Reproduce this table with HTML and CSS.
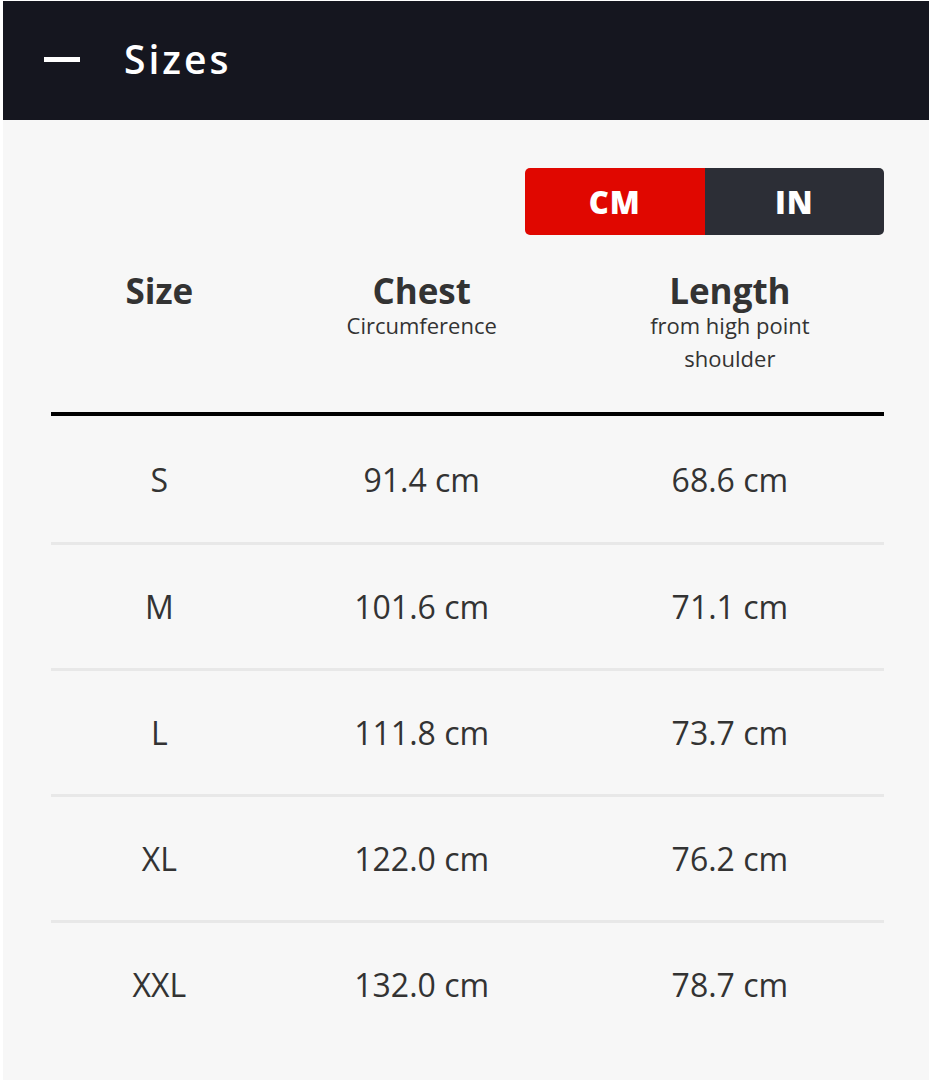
FILE: index.html
```html
<!DOCTYPE html>
<html lang="en">
<head>
<meta charset="utf-8">
<title>Sizes</title>
<link rel="stylesheet" href="styles.css">
</head>
<body>
<div class="page">
  <header class="bar">
    <span class="minus"></span>
    <h1 class="bar-title">Sizes</h1>
  </header>
  <section class="content">
    <div class="toggle-row">
      <div class="toggle">
        <span class="unit unit-on">CM</span>
        <span class="unit unit-off">IN</span>
      </div>
    </div>
    <table class="sizes">
      <colgroup>
        <col class="c1">
        <col class="c2">
        <col class="c3">
      </colgroup>
      <thead>
        <tr>
          <th><span class="th-title">Size</span></th>
          <th><span class="th-title">Chest</span><span class="th-sub">Circumference</span></th>
          <th><span class="th-title">Length</span><span class="th-sub th-sub-narrow">from high point shoulder</span></th>
        </tr>
      </thead>
      <tbody>
        <tr class="first"><td>S</td><td>91.4 cm</td><td>68.6 cm</td></tr>
        <tr><td>M</td><td>101.6 cm</td><td>71.1 cm</td></tr>
        <tr><td>L</td><td>111.8 cm</td><td>73.7 cm</td></tr>
        <tr><td>XL</td><td>122.0 cm</td><td>76.2 cm</td></tr>
        <tr><td>XXL</td><td>132.0 cm</td><td>78.7 cm</td></tr>
      </tbody>
    </table>
  </section>
</div>
</body>
</html>
```

FILE: styles.css
```css
html, body {
  margin: 0;
  padding: 0;
}
body {
  background: #ffffff;
  font-family: "Open Sans", "Noto Sans", sans-serif;
  color: #333333;
}
.page {
  margin-left: 3px;
  background: #f7f7f7;
  min-height: 1080px;
}
.bar {
  height: 119px;
  margin-top: 1px;
  background: #15161f;
  display: flex;
  align-items: center;
  padding-left: 41px;
  gap: 44px;
}
.minus {
  width: 36px;
  height: 5px;
  background: #ffffff;
  margin-top: -2px;
}
.bar-title {
  margin: 0;
  color: #ffffff;
  font-size: 39px;
  font-weight: 600;
  letter-spacing: 3px;
  line-height: 1;
  margin-top: -4px;
}
.content {
  padding: 48px 45px 0 48px;
}
.toggle-row {
  display: flex;
  justify-content: flex-end;
}
.toggle {
  display: flex;
  width: 359px;
  height: 67px;
  border-radius: 5px;
  overflow: hidden;
}
.unit {
  flex: 1;
  display: flex;
  align-items: center;
  justify-content: center;
  color: #ffffff;
  font-weight: 800;
  font-size: 31px;
  letter-spacing: 1px;
}
.unit-on {
  background: #e00700;
}
.unit-off {
  background: #2c2e36;
}
.sizes {
  width: 100%;
  border-collapse: collapse;
  table-layout: fixed;
}
.c1 { width: 26%; }
.c2 { width: 37%; }
.c3 { width: 37%; }
.sizes th {
  vertical-align: top;
  text-align: center;
  padding: 38px 0 37px;
  border-bottom: 4px solid #000000;
}
.th-title {
  display: block;
  font-size: 35px;
  font-weight: 700;
  line-height: 36px;
  color: #333333;
}
.th-sub {
  display: block;
  font-size: 22px;
  font-weight: 400;
  line-height: 33px;
  color: #333333;
}
.th-sub-narrow {
  max-width: 200px;
  margin: 0 auto;
}
.sizes td {
  height: 123px;
  padding: 0;
  text-align: center;
  vertical-align: middle;
  font-size: 32px;
  font-weight: 400;
  color: #333333;
  border-bottom: 3px solid #e8e8e8;
}
.sizes tr.first td {
  height: 126px;
}
.sizes tbody tr:last-child td {
  border-bottom: none;
}
```
